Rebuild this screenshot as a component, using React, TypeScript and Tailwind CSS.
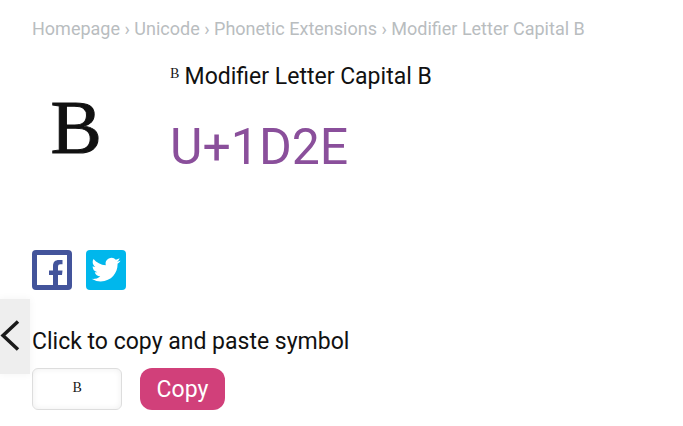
import React from "react";

const crumbs = ["Homepage", "Unicode", "Phonetic Extensions"];
const SYMBOL = "ᴮ";

function Breadcrumbs() {
  return (
    <nav aria-label="Breadcrumb" className="text-lg leading-6 text-[#b9bdbf]">
      {crumbs.map((name) => (
        <React.Fragment key={name}>
          <a href="#">{name}</a>
          {" › "}
        </React.Fragment>
      ))}
      <span>Modifier Letter Capital B</span>
    </nav>
  );
}

function ShareLinks() {
  return (
    <div className="flex gap-[14px]">
      <a href="#" aria-label="Share on Facebook">
        <svg className="block size-10" viewBox="0 0 40 40">
          <rect width="40" height="40" rx="4" fill="#43549b" />
          <path
            fill="#fff"
            d="M5 5H35V35H26V25H30L30.500 20.500H26V17C26 15 26.800 14.300 28.500 14.300H30.500V10H27C23 10 21 12 21 16V20.500H17V25H21V35H5Z"
          />
        </svg>
      </a>
      <a href="#" aria-label="Share on Twitter">
        <svg className="block size-10" viewBox="0 0 40 40">
          <rect width="40" height="40" rx="4" fill="#00b7ec" />
          <path
            fill="#fff"
            transform="translate(5.500 5.200) scale(1.210)"
            d="M23.950 4.570a10 10 0 0 1-2.820.77 4.960 4.960 0 0 0 2.160-2.720c-.95.55-2 .95-3.130 1.180a4.920 4.920 0 0 0-8.380 4.480C7.690 8.090 4.070 6.130 1.640 3.160a4.820 4.820 0 0 0-.67 2.480c0 1.710.87 3.210 2.190 4.100a4.900 4.900 0 0 1-2.230-.62v.06a4.920 4.920 0 0 0 3.950 4.830 5 5 0 0 1-2.210.08 4.940 4.940 0 0 0 4.600 3.420A9.870 9.870 0 0 1 0 19.540a14 14 0 0 0 7.550 2.210c9.050 0 14-7.500 14-13.980 0-.21 0-.42-.02-.63a9.940 9.940 0 0 0 2.460-2.550z"
          />
        </svg>
      </a>
    </div>
  );
}

export default function App() {
  return (
    <main className="relative min-h-screen bg-white px-8 pt-[17px] font-['Roboto',sans-serif] text-[#111]">
      <Breadcrumbs />

      <section className="mt-5 flex h-[189px]">
        <div className="w-[138px] shrink-0 pl-[18px] pt-5 font-['Liberation_Serif',serif] text-[128px] leading-[128px] [-webkit-text-stroke:1px_#111]">
          {SYMBOL}
        </div>
        <div>
          <h1 className="text-[23px] leading-8">
            <span className="font-['Liberation_Serif',serif]">{SYMBOL}</span> Modifier Letter Capital B
          </h1>
          <p className="mt-6 text-[50px] leading-[60px] text-[#8a4f9b]">U+1D2E</p>
        </div>
      </section>

      <ShareLinks />

      <form className="mt-9" onSubmit={(event) => event.preventDefault()}>
        <label htmlFor="symbol" className="block text-[23px] leading-8">
          Click to copy and paste symbol
        </label>
        <div className="mt-[10px] flex gap-[18px]">
          <input
            id="symbol"
            readOnly
            value={SYMBOL}
            className="h-[42px] w-[90px] rounded-md border border-[#ddd] pt-1 text-center font-['Liberation_Serif',serif] text-[23px] shadow-[inset_0_0_6px_#eee]"
          />
          <button type="submit" className="h-[42px] w-[85px] rounded-xl bg-[#d1407a] pt-[2px] text-[23px] text-white">
            Copy
          </button>
        </div>
      </form>

      <button
        type="button"
        aria-label="Previous symbol"
        className="absolute left-0 top-[299px] h-[75px] w-[30px] bg-[#eee] shadow-[0_0_8px_#0000000d]"
      >
        <svg className="block h-[75px] w-[30px]" viewBox="0 0 30 75">
          <path d="M18 22.500L3 36.500L18 50.500" fill="none" stroke="#1a1a1a" strokeWidth="3.500" />
        </svg>
      </button>
    </main>
  );
}
